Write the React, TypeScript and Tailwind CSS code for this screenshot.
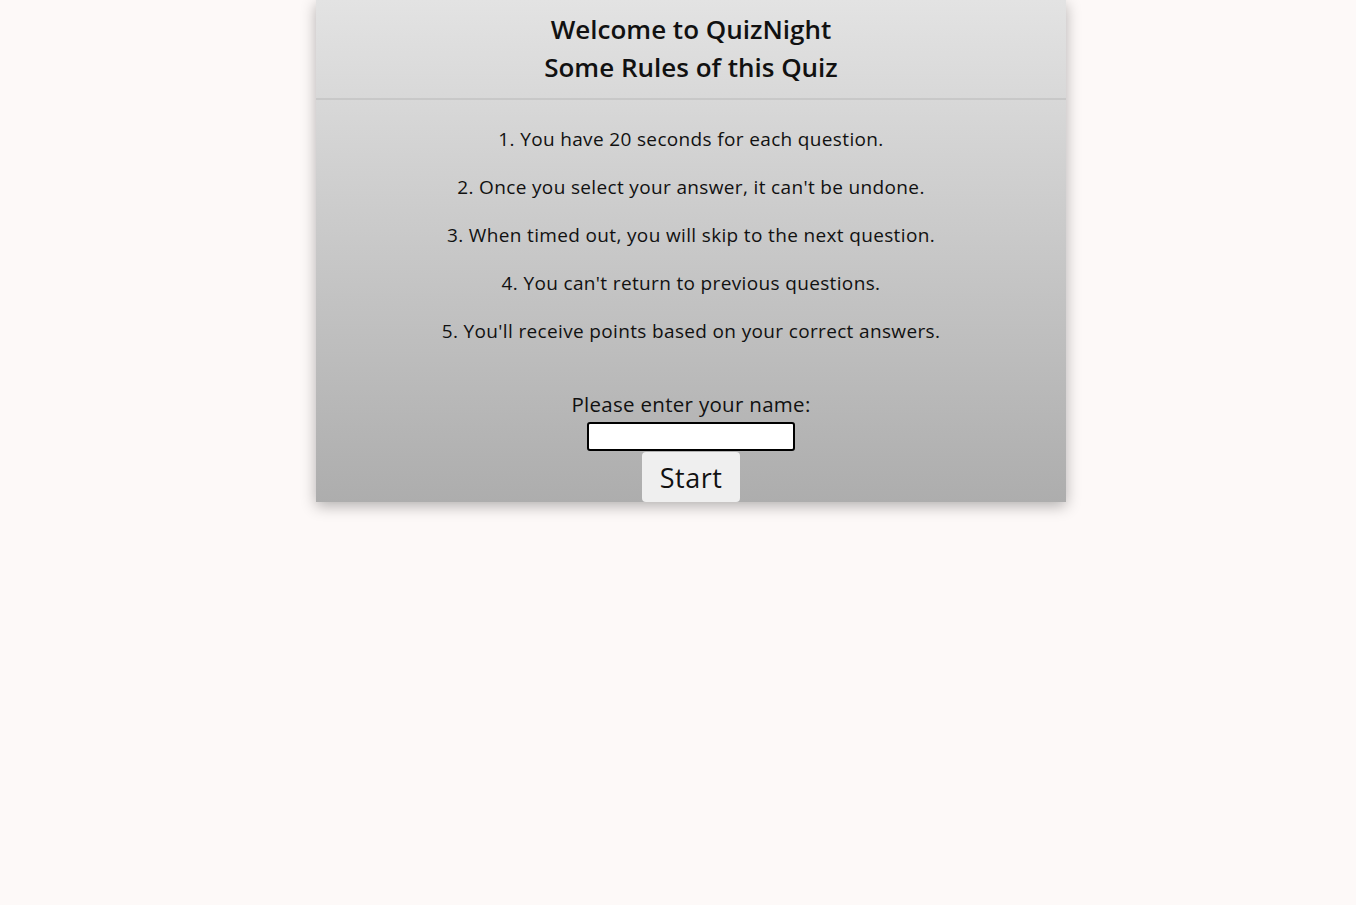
import { useState } from 'react';

const rules = [
  '1. You have 20 seconds for each question.',
  "2. Once you select your answer, it can't be undone.",
  '3. When timed out, you will skip to the next question.',
  "4. You can't return to previous questions.",
  "5. You'll receive points based on your correct answers.",
];

export default function App() {
  const [name, setName] = useState('');

  return (
    <div className="min-h-[905px] bg-[#fdf9f8] pl-[26px] font-['Open_Sans',sans-serif] text-[#111]">
      <div className="mx-auto flex w-[750px] flex-col items-center bg-linear-to-b from-[#e3e3e3] to-[#adadad] shadow-[0_4px_14px_rgba(0,0,0,0.3)]">
        <div className="flex h-[100px] w-full flex-col items-center justify-center border-b-2 border-[#c8c8c8] pb-[2px]">
          <h1 className="text-[26px] font-semibold leading-[38px]">Welcome to QuizNight</h1>
          <h2 className="text-[26px] font-semibold leading-[38px]">Some Rules of this Quiz</h2>
        </div>

        <div className="flex flex-col items-center gap-[21px] pt-[26px] text-[19px] leading-[27px] tracking-[0.35px]">
          {rules.map((r) => (
            <p key={r}>{r}</p>
          ))}
        </div>

        <label className="mt-[46px] text-[20.5px] leading-[27px] tracking-[0.3px]">Please enter your name:</label>
        <input
          value={name}
          onChange={(e) => setName(e.target.value)}
          className="mt-[4px] h-[29px] w-[208px] rounded-[3px] border-2 border-black bg-white px-1 outline-none"
        />
        <button className="mt-[1px] h-[50px] w-[98px] rounded-[4px] bg-[#efefef] text-[27px] leading-none tracking-[0.5px]">Start</button>
      </div>
    </div>
  );
}
